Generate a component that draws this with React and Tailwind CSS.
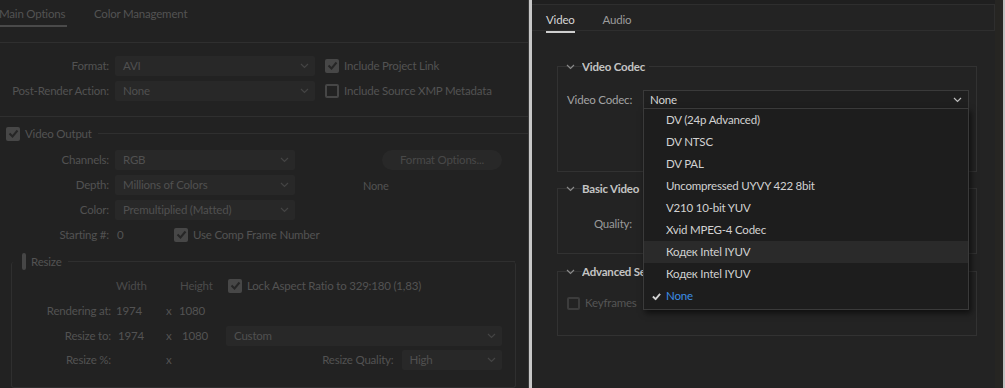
import React from "react";

const Chevron = ({ className = "" }) => (
  <svg width="9" height="6" viewBox="0 0 9 6" className={className}>
    <path d="M1 1l3.5 3.5L8 1" fill="none" stroke="currentColor" strokeWidth="1.2" />
  </svg>
);

const Check = ({ className = "" }) => (
  <svg width="11" height="9" viewBox="0 0 11 9" className={className}>
    <path d="M1.5 4.5l3 3L9.5 1.5" fill="none" stroke="currentColor" strokeWidth="2" />
  </svg>
);

const DimBox = ({ checked }) =>
  checked ? (
    <span className="w-[14px] h-[14px] rounded-[2px] bg-[#474747] flex items-center justify-center text-[#262626] shrink-0">
      <Check />
    </span>
  ) : (
    <span className="w-[14px] h-[14px] rounded-[2px] border-2 border-[#464646] shrink-0" />
  );

const DimSelect = ({ value, width }) => (
  <div className={`${width} h-[20px] bg-[#282828] rounded-[2px] flex items-center justify-between pl-[8px] pr-[6px] text-[#505050]`}>
    <span>{value}</span>
    <Chevron className="text-[#444444]" />
  </div>
);

const Label = ({ children }) => (
  <div className="w-[110px] text-right pr-[1px] text-[#525252] shrink-0">{children}</div>
);

function LeftPanel() {
  return (
    <div className="w-[528px] h-full bg-[#222222] text-[11.5px] tracking-[-0.2px] text-[#535353] flex flex-col overflow-hidden shrink-0 whitespace-nowrap">
      <div className="h-[44px] border-b border-[#2f2f2f] flex gap-[27px] items-start">
        <div className="ml-[-1px] pt-[5px] pb-[3px] border-b-2 border-[#4a4a4a] w-[68px]">Main Options</div>
        <div className="pt-[5px]">Color Management</div>
      </div>

      <div className="mt-[13px] flex items-center h-[20px]">
        <Label>Format:</Label>
        <div className="ml-[5px]"><DimSelect value="AVI" width="w-[200px]" /></div>
        <div className="ml-[10px] flex items-center gap-[5px]"><DimBox checked /><span>Include Project Link</span></div>
      </div>
      <div className="mt-[5px] flex items-center h-[20px]">
        <Label>Post-Render Action:</Label>
        <div className="ml-[5px]"><DimSelect value="None" width="w-[200px]" /></div>
        <div className="ml-[10px] flex items-center gap-[5px]"><DimBox /><span>Include Source XMP Metadata</span></div>
      </div>
      <div className="mt-[15px] border-t border-[#2f2f2f]" />

      <div className="mt-[10px] flex items-center h-[14px] pl-[6px]">
        <DimBox checked />
        <span className="ml-[5px]">Video Output</span>
        <div className="flex-1 ml-[6px] border-t border-[#2f2f2f]" />
      </div>

      <div className="flex">
        <div className="w-[295px] shrink-0 flex flex-col">
          <div className="mt-[9px] flex items-center h-[20px]">
            <Label>Channels:</Label>
            <div className="ml-[5px]"><DimSelect value="RGB" width="w-[180px]" /></div>
          </div>
          <div className="mt-[5px] flex items-center h-[20px]">
            <Label>Depth:</Label>
            <div className="ml-[5px]"><DimSelect value="Millions of Colors" width="w-[180px]" /></div>
          </div>
          <div className="mt-[5px] flex items-center h-[20px]">
            <Label>Color:</Label>
            <div className="ml-[5px]"><DimSelect value="Premultiplied (Matted)" width="w-[180px]" /></div>
          </div>
          <div className="mt-[5px] flex items-center h-[20px]">
            <Label>Starting #:</Label>
            <span className="ml-[7px] w-[57px] shrink-0">0</span>
            <DimBox checked />
            <span className="ml-[5px]">Use Comp Frame Number</span>
          </div>
        </div>
        <div className="ml-[68px] flex flex-col">
          <div className="mt-[9px] ml-[19px] w-[120px] h-[20px] rounded-full bg-[#282828] flex items-center justify-center text-[#484848]">
            Format Options...
          </div>
          <div className="mt-[8px] text-[11px] text-[#525252]">None</div>
        </div>
      </div>

      <div className="mt-[17px] ml-[11px] w-[505px] h-[131px] border-l border-r border-b border-[#2f2f2f] rounded-[3px] flex flex-col">
        <div className="flex items-center h-[14px] mt-[-7px]">
          <div className="ml-[10px]"><DimBox /></div>
          <span className="ml-[5px]">Resize</span>
          <div className="flex-1 ml-[6px] border-t border-[#2f2f2f]" />
        </div>
        <div className="flex items-center h-[14px] mt-[10px]">
          <span className="ml-[104px] w-[64px] text-[#4b4b4b]">Width</span>
          <span className="w-[48px] text-[#4b4b4b]">Height</span>
          <DimBox checked />
          <span className="ml-[5px]">Lock Aspect Ratio to 329:180 (1,83)</span>
        </div>
        <div className="flex items-center h-[20px] mt-[8px]">
          <div className="w-[99px] text-right text-[#525252]">Rendering at:</div>
          <span className="ml-[5px] w-[50px]">1974</span>
          <span className="w-[13px]">x</span>
          <span>1080</span>
        </div>
        <div className="flex items-center h-[20px] mt-[5px]">
          <div className="w-[99px] text-right text-[#525252]">Resize to:</div>
          <span className="ml-[7px] w-[48px]">1974</span>
          <span className="w-[16px]">x</span>
          <span className="w-[44px]">1080</span>
          <DimSelect value="Custom" width="w-[276px]" />
        </div>
        <div className="flex items-center h-[20px] mt-[4px]">
          <div className="w-[99px] text-right text-[#525252]">Resize %:</div>
          <span className="ml-[55px]">x</span>
          <div className="w-[222px] text-right text-[#525252]">Resize Quality:</div>
          <div className="ml-[8px]"><DimSelect value="High" width="w-[100px]" /></div>
        </div>
      </div>
    </div>
  );
}

const codecs = [
  "DV (24p Advanced)",
  "DV NTSC",
  "DV PAL",
  "Uncompressed UYVY 422 8bit",
  "V210 10-bit YUV",
  "Xvid MPEG-4 Codec",
  "Кодек Intel IYUV",
  "Кодек Intel IYUV",
];

const SectionHead = ({ title, clip }) => (
  <div className="flex items-center h-[16px] mt-[-8px]">
    <Chevron className="ml-[8px] text-[#8a8a8a]" />
    <span className={`ml-[7px] font-bold text-[#c4c4c4] bg-[#232323] pr-[4px] overflow-hidden ${clip ? "w-[62px]" : ""}`}>{title}</span>
  </div>
);

function RightPanel() {
  return (
    <div className="relative flex-1 h-full bg-[#232323] text-[11.5px] tracking-[-0.2px] flex whitespace-nowrap">
      <div className="flex-1 flex flex-col">
        <div className="h-[4px] bg-[#1f1f1f]" />
        <div className="h-[27px] border-t border-b border-r border-[#2e2e2e] flex items-start gap-[28px] pl-[14px]">
          <div className="pt-[6px] pb-[3px] border-b-2 border-[#cfcfcf] text-[#d6d6d6]">Video</div>
          <div className="pt-[6px] text-[#9c9c9c]">Audio</div>
        </div>

        <div className="mt-[35px] ml-[25px] w-[420px] h-[106px] border border-[#323232] flex flex-col">
          <SectionHead title="Video Codec" />
          <div className="flex items-center mt-[15px] h-[20px]">
            <span className="ml-[9px] w-[76px] text-[#a3a3a3]">Video Codec:</span>
            <div className="w-[326px] h-[20px] bg-[#1f1f1f] border border-[#3a3a3a] flex items-center justify-between pl-[6px] pr-[6px] text-[#d4d4d4]">
              <span>None</span>
              <Chevron className="text-[#bdbdbd]" />
            </div>
          </div>
        </div>

        <div className="mt-[16px] ml-[25px] w-[420px] h-[66px] border border-[#323232] flex flex-col">
          <SectionHead title="Basic Video" />
          <div className="flex items-center mt-[17px] h-[20px]">
            <span className="w-[74px] text-right text-[#9a9a9a]">Quality:</span>
          </div>
        </div>

        <div className="mt-[17px] ml-[25px] w-[420px] h-[65px] border border-[#323232] flex flex-col">
          <SectionHead title="Advanced Settings" clip />
          <div className="flex items-center mt-[16px] h-[14px] ml-[9px]">
            <span className="w-[13px] h-[13px] border-2 border-[#3c3c3c] rounded-[2px]" />
            <span className="ml-[5px] text-[#555555]">Keyframes</span>
          </div>
        </div>
      </div>
      <div className="w-[8px] bg-[#262522]" />
      <div className="w-[2px] bg-[#bfbfbf]" />

      <div className="absolute left-[111px] top-[108px] w-[326px] bg-[#1d1d1d] border border-[#3a3a3a] shadow-[2px_3px_6px_rgba(0,0,0,0.6)]">
        {codecs.map((c, i) => (
          <div
            key={i}
            className={`h-[22px] flex items-center pl-[22px] text-[#d2d2d2] ${i === 6 ? "bg-[#2a2a2a]" : ""}`}
          >
            {c}
          </div>
        ))}
        <div className="h-[22px] flex items-center text-[#3c8ee6]">
          <Check className="ml-[7px] mr-[4px] text-[#d0d0d0] scale-90" />
          <span>None</span>
        </div>
        <div className="h-[2px]" />
      </div>
    </div>
  );
}

export default function App() {
  return (
    <div className="w-[1005px] h-[388px] flex overflow-hidden bg-[#222222]" style={{ fontFamily: "Lato, 'Noto Sans', sans-serif" }}>
      <LeftPanel />
      <div className="w-[4px] h-full bg-[#c7c7c7] border-l border-[#3a3a3a]" />
      <RightPanel />
    </div>
  );
}
